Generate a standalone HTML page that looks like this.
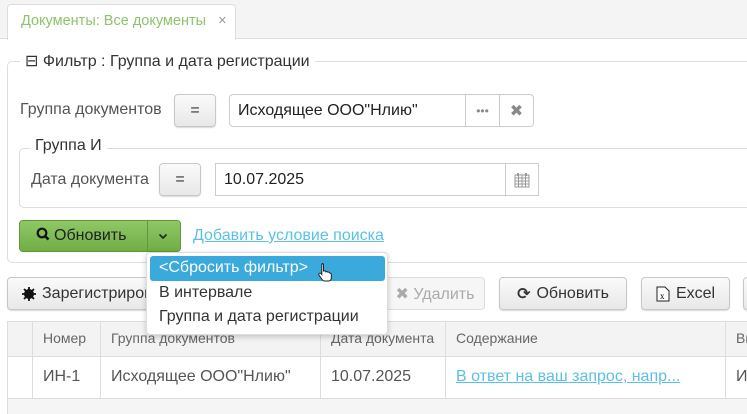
<!DOCTYPE html>
<html><head><meta charset="utf-8"><style>
*{box-sizing:border-box}
body{margin:0;width:747px;height:414px;overflow:hidden;background:#fff;font-family:"Liberation Sans","DejaVu Sans",sans-serif;color:#333;font-size:16px;position:relative}
.a{position:absolute}
.btn{position:absolute;border:1px solid #c8c8c8;border-radius:4px;background:linear-gradient(#fafafa,#e8e8e8);box-shadow:0 1px 1px rgba(0,0,0,.15);display:flex;align-items:center;justify-content:center;font-size:16px;color:#333}
.inp{position:absolute;border:1px solid #ccc;background:#fff;display:flex;align-items:center;padding-left:8px;font-size:16px;color:#222}
.lbl{position:absolute;font-size:16px;color:#555}
.th{position:absolute;top:321px;height:36px;border-right:1px solid #ddd;font-size:14px;color:#666;padding:9px 0 0 11px}
.td{position:absolute;top:357px;height:41px;border-right:1px solid #ddd;font-size:16px;color:#555;padding:11px 0 0 11px}
svg{flex-shrink:0}
</style></head><body>
<div class="a" style="left:0;top:0;width:747px;height:39px;background:#f4f4f4;border-bottom:1px solid #ddd"></div>
<div class="a" style="left:7px;top:4px;width:229px;height:36px;background:#fff;border:1px solid #ddd;border-bottom:none;border-radius:4px 4px 0 0;padding:8px 0 0 13px;color:#8cc46a;font-size:14.5px">Документы: Все документы <span style="color:#999;margin-left:8px">×</span></div>

<div class="a" style="left:7px;top:61px;width:760px;height:202px;border:1px solid #ddd;border-radius:5px"></div>
<div class="a" style="left:20px;top:51px;background:#fff;padding:0 5px;font-size:16px;color:#333">⊟ Фильтр : Группа и дата регистрации</div>

<div class="lbl" style="left:20px;top:101px">Группа документов</div>
<div class="btn" style="left:174px;top:94px;width:42px;height:33px">=</div>
<div class="inp" style="left:229px;top:94px;width:237px;height:33px;border-radius:4px 0 0 4px">Исходящее ООО"Нлию"</div>
<div class="inp" style="left:465px;top:94px;width:35px;height:33px;padding:0;justify-content:center;color:#888;font-size:12px">•••</div>
<div class="inp" style="left:499px;top:94px;width:35px;height:33px;padding:0;justify-content:center;color:#888;border-radius:0 4px 4px 0;font-weight:bold">✖</div>

<div class="a" style="left:19px;top:148px;width:760px;height:60px;border:1px solid #ddd;border-radius:5px"></div>
<div class="a" style="left:30px;top:137px;background:#fff;padding:0 5px;font-size:16px;color:#333">Группа И</div>
<div class="lbl" style="left:31px;top:171px">Дата документа</div>
<div class="btn" style="left:159px;top:163px;width:42px;height:33px">=</div>
<div class="inp" style="left:215px;top:163px;width:291px;height:33px">10.07.2025</div>
<div class="inp" style="left:505px;top:163px;width:34px;height:33px;padding:0;justify-content:center">
<svg width="16" height="16" viewBox="0 0 16 16"><rect x="1" y="3" width="14" height="12" fill="none" stroke="#999"/><path d="M1 6h14M1 9h14M1 12h14M4.5 3v12M8 3v12M11.5 3v12" stroke="#999"/><path d="M4 1v3M12 1v3" stroke="#999" stroke-width="2"/></svg></div>

<div class="a" style="left:19px;top:220px;width:162px;height:32px;background:linear-gradient(#8fc866,#6fae45);border:1px solid #5e9a3a;border-radius:4px"></div>
<div class="a" style="left:147px;top:221px;width:1px;height:30px;background:#5e9a3a"></div>
<div class="a" style="left:36px;top:227px;font-size:16px;color:#222"><svg width="14" height="14" viewBox="0 0 14 14" style="vertical-align:-1px;margin-right:4px"><circle cx="6" cy="6" r="4.3" fill="none" stroke="#111" stroke-width="2.2"/><path d="M9 9l3.5 3.5" stroke="#111" stroke-width="2.6"/></svg>Обновить</div>
<svg class="a" style="left:158px;top:233px" width="10" height="7" viewBox="0 0 10 7"><path d="M1.5 1.5l3.5 3.5 3.5-3.5" fill="none" stroke="#222" stroke-width="1.6"/></svg>
<div class="a" style="left:193px;top:227px;font-size:16px;color:#5bc0e6;text-decoration:underline">Добавить условие поиска</div>

<div class="btn" style="left:7px;top:277px;width:160px;height:33px;justify-content:flex-start;padding-left:14px;white-space:nowrap;overflow:hidden"><svg width="14" height="14" viewBox="0 0 14 14" style="margin-right:6px"><circle cx="7" cy="7" r="5" fill="#111"/><path d="M7 0v14M0 7h14M2 2l10 10M12 2L2 12" stroke="#111" stroke-width="1.8"/></svg>Зарегистрировать</div>
<div class="btn" style="left:385px;top:277px;width:100px;height:33px;color:#aaa;background:#f6f6f6;box-shadow:none;border-color:#ddd">✖ Удалить</div>
<div class="btn" style="left:499px;top:277px;width:128px;height:33px"><b style="margin-right:6px">⟳</b>Обновить</div>
<div class="btn" style="left:641px;top:277px;width:89px;height:33px"><svg width="14" height="16" viewBox="0 0 14 16" style="margin-right:6px"><path d="M1 1h8l4 4v10H1z" fill="#fff" stroke="#222"/><text x="4" y="13" font-size="9" font-family="Liberation Serif">x</text></svg>Excel</div>
<div class="btn" style="left:743px;top:277px;width:30px;height:33px"></div>

<div class="a" style="left:7px;top:321px;width:740px;height:36px;background:#f3f3f3;border-top:1px solid #ddd;border-bottom:1px solid #ddd"></div>
<div class="a" style="left:7px;top:398px;width:740px;height:16px;background:#f5f5f5;border-top:1px solid #ddd"></div>
<div class="a" style="left:7px;top:321px;width:1px;height:93px;background:#ddd"></div>
<div class="th" style="left:7px;width:26px"></div>
<div class="th" style="left:32px;width:69px">Номер</div>
<div class="th" style="left:100px;width:221px">Группа документов</div>
<div class="th" style="left:320px;width:126px">Дата документа</div>
<div class="th" style="left:445px;width:281px">Содержание</div>
<div class="th" style="left:725px;width:30px">Вн</div>
<div class="td" style="left:7px;width:26px"></div>
<div class="td" style="left:32px;width:69px">ИН-1</div>
<div class="td" style="left:100px;width:221px">Исходящее ООО"Нлию"</div>
<div class="td" style="left:320px;width:126px">10.07.2025</div>
<div class="td" style="left:445px;width:281px;color:#5bc0e6;text-decoration:underline;white-space:nowrap">В ответ на ваш запрос, напр...</div>
<div class="td" style="left:725px;width:30px">И</div>

<div class="a" style="left:146px;top:252px;width:242px;height:83px;background:#fff;border:1px solid #ddd;border-radius:4px;box-shadow:0 2px 6px rgba(0,0,0,.2)"></div>
<div class="a" style="left:150px;top:256px;width:235px;height:25px;background:#3aa9dc;border-radius:3px;color:#fff;font-size:16px;padding:3px 0 0 9px">&lt;Сбросить фильтр&gt;</div>
<svg class="a" style="left:317px;top:262px" width="16" height="20" viewBox="0 0 16 20"><path d="M5 1.5c1 0 1.5.6 1.5 1.5v6l1-.2c.8 0 1.3.4 1.4 1 .6-.4 1.6-.3 2 .4.6-.3 1.6 0 1.8.8.9-.1 1.6.5 1.6 1.4v3.6c0 1.5-1 3-2.5 3H7.5c-1 0-1.8-.6-2.4-1.5L2 13.2c-.5-.8-.2-1.7.6-2 .6-.2 1.2 0 1.6.5l.6.8V3c0-.9.3-1.5 1.2-1.5z" fill="#fff" stroke="#222" stroke-width="1"/></svg>
<div class="a" style="left:159px;top:284px;font-size:16px;color:#333">В интервале</div>
<div class="a" style="left:159px;top:308px;font-size:16px;color:#333">Группа и дата регистрации</div>
</body></html>
